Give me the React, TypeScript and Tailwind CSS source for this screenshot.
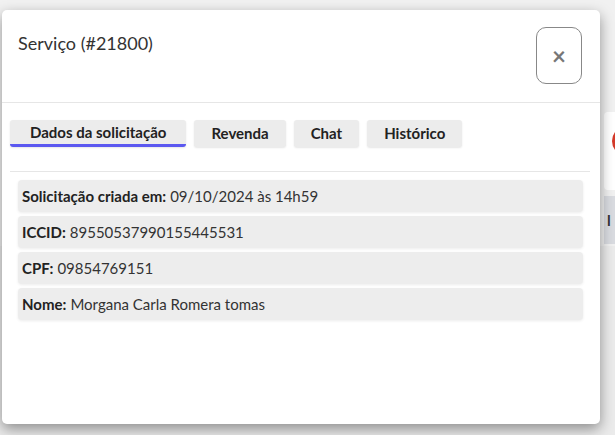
import React from "react";

const rows: { label: string; value: string }[] = [
  { label: "Solicitação criada em:", value: "09/10/2024 às 14h59" },
  { label: "ICCID:", value: "89550537990155445531" },
  { label: "CPF:", value: "09854769151" },
  { label: "Nome:", value: "Morgana Carla Romera tomas" },
];

const tabs = ["Dados da solicitação", "Revenda", "Chat", "Histórico"];

export default function App() {
  return (
    <div
      className="relative w-[615px] h-[435px] overflow-hidden bg-[#f1f1f1]"
      style={{ fontFamily: "Lato, 'Noto Sans', sans-serif" }}
    >
      {/* faint background page content */}
      <div className="absolute left-[604px] top-[112px] w-[40px] h-[78px] rounded bg-white">
        <div className="absolute left-[8px] top-[14px] w-[30px] h-[30px] rounded-full bg-[#d43a2a]" />
      </div>
      <div className="absolute left-[604px] top-[196px] w-[11px] h-[48px] bg-[#d9dbe0] flex items-center overflow-hidden">
        <span className="pl-[3px] text-[15px] font-bold text-[#333]">l</span>
      </div>
      <div className="absolute left-0 top-[246px] w-[615px] h-[190px] bg-[#ebebeb]" />

      {/* modal */}
      <div className="absolute left-[2px] top-[10px] w-[598px] h-[414px] bg-white rounded-[5px] shadow-[0_5px_14px_rgba(0,0,0,0.4)] flex flex-col">
        <div className="flex items-start justify-between pl-[16px] pr-[18px] pt-[17px] h-[93px] border-b border-[#e6e6e6]">
          <h1 className="text-[18px] text-[#333] leading-[30px] mt-[1px]">Serviço (#21800)</h1>
          <button className="w-[46px] h-[57px] rounded-[10px] border border-[#888] flex items-center justify-center text-[#777] text-[24px] font-bold leading-none">
            ×
          </button>
        </div>
        <div className="pl-[8px] pr-[9px] pt-[17px]">
          <div className="flex gap-[8px]">
            {tabs.map((t, i) => (
              <div
                key={t}
                className={
                  "h-[27px] flex items-center rounded-[3px] bg-[#ececec] text-[15px] font-bold text-[#222] shadow-[0_1px_2px_rgba(0,0,0,0.1)] " +
                  (i === 0 ? "px-[20px] border-b-[3px] border-[#5b58f0] pt-[1px]" : "px-[17px]")
                }
              >
                {t}
              </div>
            ))}
          </div>
          <div className="mt-[24px] mr-[1px] border-t border-[#e6e6e6]" />
          <div className="px-[8px] pt-[8px] flex flex-col gap-[4px]">
            {rows.map((r) => (
              <div
                key={r.label}
                className="h-[32px] flex items-center px-[4px] rounded-[4px] bg-[#ededed] text-[15px] text-[#333] shadow-[0_1px_3px_rgba(0,0,0,0.08)]"
              >
                <span className="font-bold text-[#222]">{r.label}</span>
                <span className="ml-[4px]">{r.value}</span>
              </div>
            ))}
          </div>
        </div>
      </div>
    </div>
  );
}
